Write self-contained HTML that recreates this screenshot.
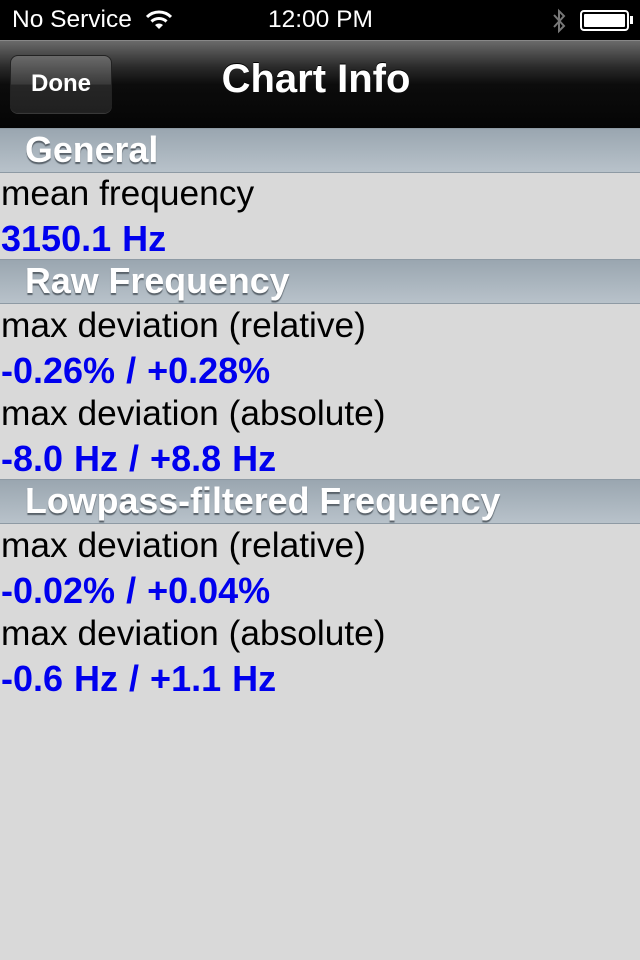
<!DOCTYPE html>
<html><head><meta charset="utf-8"><style>
*{margin:0;padding:0;box-sizing:border-box}
body{width:640px;height:960px;background:#d9d9d9;font-family:"Liberation Sans",sans-serif;overflow:hidden;position:relative}
.status{position:absolute;top:0;left:0;width:640px;height:40px;background:#000;color:#fff;font-size:24.5px}
.nav{position:absolute;top:40px;left:0;width:640px;height:88px;background:linear-gradient(#6a6a6a 0%,#2a2a2a 30%,#0c0c0c 50%,#050505 100%);border-top:1px solid #888}
.done{position:absolute;left:10px;top:14px;width:102px;height:58px;border-radius:8px;border:1px solid #222;background:linear-gradient(#6a6a6a,#3a3a3a 50%,#262626 52%,#202020);color:#fff;font-weight:bold;font-size:24px;text-align:center;line-height:56px;box-shadow:0 1px 0 rgba(255,255,255,.2)}
.title{position:absolute;left:0;width:632px;text-align:center;top:16px;color:#fff;font-weight:bold;font-size:40px;text-shadow:0 -1px 0 #000}
.hdr{position:absolute;left:0;width:640px;height:45px;background:linear-gradient(#9aa6b0,#b8c2ca);border-top:1px solid #8e9aa4;border-bottom:1px solid #8e9aa4;color:#fff;font-weight:bold;font-size:35.8px;padding-left:25px;line-height:43px;text-shadow:0 2px 1px #59626a}
.r{position:absolute;left:1px;font-size:35.3px;color:#000}
.b{position:absolute;left:1px;font-size:36px;color:#0000ee;font-weight:bold;word-spacing:1px}
</style></head><body>
<div class="status">
<span style="position:absolute;left:12px;top:6px">No Service</span>
<svg style="position:absolute;left:146px;top:10px" width="26" height="20" viewBox="0 0 26 20"><path d="M1 7 A17 17 0 0 1 25 7" stroke="#fff" stroke-width="3" fill="none"/><path d="M5.5 11.5 A11 11 0 0 1 20.5 11.5" stroke="#fff" stroke-width="3" fill="none"/><path d="M13 19 L9 15 A6 6 0 0 1 17 15 Z" fill="#fff"/></svg>
<span style="position:absolute;left:268px;top:6px">12:00 PM</span>
<svg style="position:absolute;left:551px;top:8px" width="16" height="26" viewBox="0 0 16 26"><path d="M3 7 L13 18 L8 23 L8 3 L13 8 L3 19" stroke="#777" stroke-width="2" fill="none"/></svg>
<div style="position:absolute;left:580px;top:10px;width:49px;height:21px;border:2px solid #fff;border-radius:4px;padding:2px"><div style="background:#fff;width:100%;height:100%;border-radius:1px"></div></div>
<div style="position:absolute;left:630px;top:16px;width:3px;height:8px;background:#fff"></div>
</div>
<div class="nav"><div class="done">Done</div><div class="title">Chart Info</div></div>
<div class="hdr" style="top:128px">General</div>
<div class="r" style="top:174px">mean frequency</div>
<div class="b" style="top:218px">3150.1 Hz</div>
<div class="hdr" style="top:259px">Raw Frequency</div>
<div class="r" style="top:306px">max deviation (relative)</div>
<div class="b" style="top:350px">-0.26% / +0.28%</div>
<div class="r" style="top:394px">max deviation (absolute)</div>
<div class="b" style="top:438px">-8.0 Hz / +8.8 Hz</div>
<div class="hdr" style="top:479px">Lowpass-filtered Frequency</div>
<div class="r" style="top:526px">max deviation (relative)</div>
<div class="b" style="top:570px">-0.02% / +0.04%</div>
<div class="r" style="top:614px">max deviation (absolute)</div>
<div class="b" style="top:658px">-0.6 Hz / +1.1 Hz</div>
</body></html>
